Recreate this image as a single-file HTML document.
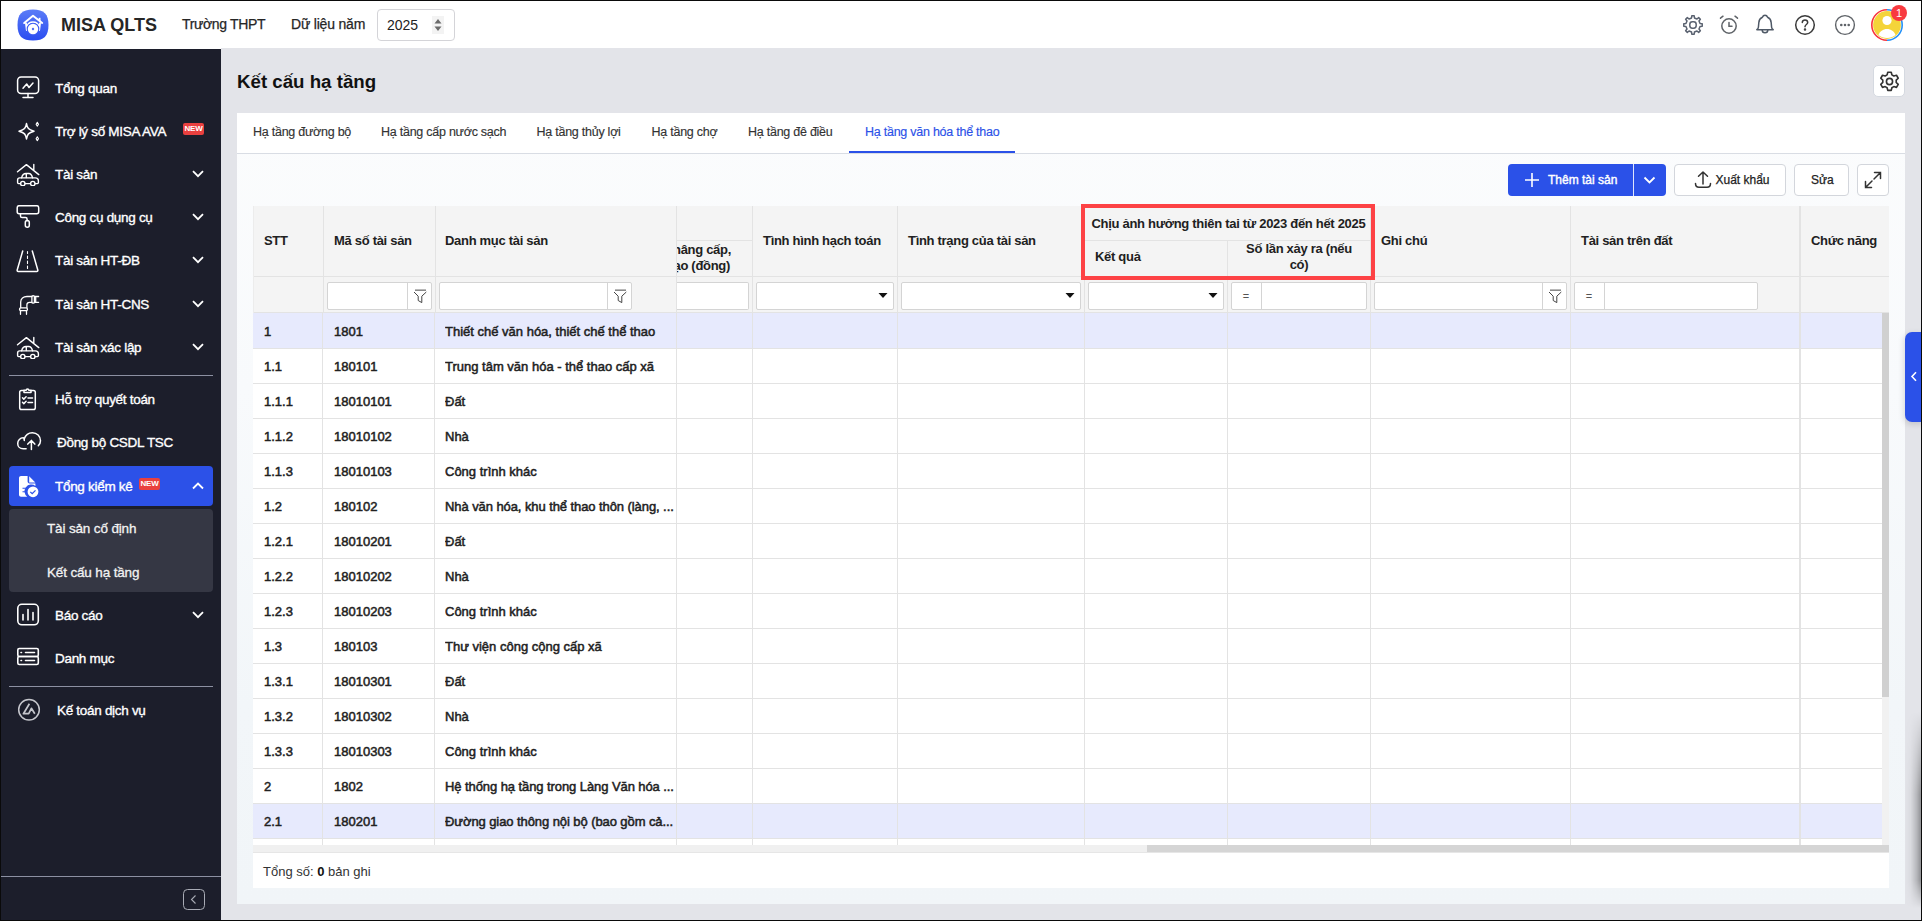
<!DOCTYPE html>
<html><head><meta charset="utf-8">
<style>
*{box-sizing:border-box;margin:0;padding:0}
html,body{width:1922px;height:921px;overflow:hidden;background:#e3e4e9;font-family:"Liberation Sans",sans-serif;color:#212121}
.a{position:absolute}
.t{position:absolute;white-space:nowrap;line-height:1}
#frame{position:absolute;left:0;top:0;width:1922px;height:921px;border:1px solid #0a0a0a;z-index:50;pointer-events:none}
#hdr{position:absolute;left:0;top:0;width:1922px;height:48px;background:#fff}
#side{position:absolute;left:0;top:49px;width:221px;height:872px;background:#1c1e2b}
.si{position:absolute;left:0;width:221px;height:40px}
.si svg.ic{position:absolute;left:16px;top:8px}
.si .lb{position:absolute;left:55px;top:0.5px;line-height:40px;font-size:13.5px;color:#fff;letter-spacing:-0.3px;-webkit-text-stroke:0.35px #fff;white-space:nowrap}
.si .chev{position:absolute;left:192px;top:16px}
.new{position:absolute;height:12px;width:21px;background:#e9403f;border-radius:2px;color:#fff;font-size:8px;font-weight:bold;line-height:12px;text-align:center;letter-spacing:-0.2px}
.sep{position:absolute;left:9px;width:204px;height:1px;background:#8c90a2}
.tab{font-size:12.5px;letter-spacing:-0.25px;-webkit-text-stroke:0.15px currentColor}
.th{font-size:13px;font-weight:bold;color:#212121;letter-spacing:-0.3px}
.td{font-size:13px;line-height:17px;color:#212121;-webkit-text-stroke:0.5px #212121}
.med{-webkit-text-stroke:0.25px currentColor}
</style></head><body>
<div id="hdr">
  <div class="a" style="left:0;top:48px;width:221px;height:1px;background:#fff"></div>
  <svg class="a" style="left:17px;top:9px" width="32" height="32" viewBox="0 0 32 32">
    <defs><linearGradient id="lg" x1="0" y1="0" x2="0" y2="1"><stop offset="0" stop-color="#5b7cf7"/><stop offset="1" stop-color="#2a4cf0"/></linearGradient></defs>
    <path d="M16 0.5C27 0.5 31.5 5 31.5 16S27 31.5 16 31.5 0.5 27 0.5 16 5 0.5 16 0.5Z" fill="url(#lg)"/>
    <path d="M7.2 14L16 6.8L25.2 14" stroke="#fff" stroke-width="2" fill="none" stroke-linecap="round" stroke-linejoin="round"/>
    <path d="M22.6 8.8v3.2" stroke="#fff" stroke-width="1.8"/>
    <path d="M9 14.5l0.8 6.5M23 14.5l-0.8 6.5" stroke="#fff" stroke-width="1.9" stroke-linecap="round"/>
    <path d="M10 17.5A6.3 6.3 0 0 1 22 17.5" stroke="#fff" stroke-width="1.6" fill="none"/>
    <circle cx="16" cy="20" r="6.3" fill="#3d5cf3"/>
    <circle cx="16" cy="20" r="5.2" fill="#fff"/>
    <path d="M16 18.6l1.3 1.4-1.3 1.4-1.3-1.4z" fill="#3557f2"/>
  </svg>
  <div class="t" style="left:61px;top:16px;font-size:18px;font-weight:bold;color:#262626">MISA QLTS</div>
  <div class="t" style="left:182px;top:17px;font-size:14px;color:#262626;letter-spacing:-0.35px;-webkit-text-stroke:0.25px #262626">Trường THPT</div>
  <div class="t" style="left:291px;top:17px;font-size:14px;color:#262626;letter-spacing:-0.2px;-webkit-text-stroke:0.25px #262626">Dữ liệu năm</div>
  <div class="a" style="left:377px;top:9px;width:78px;height:32px;border:1px solid #d4d4d8;border-radius:4px"></div>
  <div class="t" style="left:387px;top:18px;font-size:14px;color:#222">2025</div>
  <svg class="a" style="left:432px;top:16px" width="12" height="18" viewBox="0 0 12 18"><rect x="0" y="0" width="12" height="18" fill="#f3f3f3"/><path d="M2.5 7.5L6 3L9.5 7.5Z M2.5 10.5L6 15L9.5 10.5Z" fill="#6b6b6b"/></svg>
  <svg class="a" style="left:1682px;top:14px" width="22" height="22" viewBox="0 0 22 22" fill="none" stroke="#5a6270" stroke-width="1.5" stroke-linejoin="round"><path d="M9.57 3.94 L9.79 1.78 L12.21 1.78 L12.43 3.94 L14.98 5.00 L16.67 3.63 L18.37 5.33 L17.00 7.02 L18.06 9.57 L20.22 9.79 L20.22 12.21 L18.06 12.43 L17.00 14.98 L18.37 16.67 L16.67 18.37 L14.98 17.00 L12.43 18.06 L12.21 20.22 L9.79 20.22 L9.57 18.06 L7.02 17.00 L5.33 18.37 L3.63 16.67 L5.00 14.98 L3.94 12.43 L1.78 12.21 L1.78 9.79 L3.94 9.57 L5.00 7.02 L3.63 5.33 L5.33 3.63 L7.02 5.00Z"/><rect x="7.8" y="7.8" width="6.4" height="6.4" rx="2.6"/></svg>
  <svg class="a" style="left:1718px;top:14px" width="22" height="22" viewBox="0 0 22 22" fill="none" stroke="#5f6368" stroke-width="1.5" stroke-linecap="round"><circle cx="11" cy="12" r="7.2"/><path d="M11 8.5v3.8h3M2.5 4.2l2.5-2M19.5 4.2l-2.5-2"/></svg>
  <svg class="a" style="left:1754px;top:14px" width="22" height="22" viewBox="0 0 22 22" fill="none" stroke="#4f5966" stroke-width="1.5" stroke-linejoin="round" stroke-linecap="round"><path d="M2.8 15.7h16.4c-0.9-0.5-1.5-1.3-1.6-2.4l-0.4-4.6C17 6 15.6 4.2 13.6 3.3C13.2 2.2 12.2 1.3 11 1.3S8.8 2.2 8.4 3.3C6.4 4.2 5 6 4.8 8.7l-0.4 4.6c-0.1 1.1-0.7 1.9-1.6 2.4z"/><path d="M8.2 16c0 1.7 1.2 2.8 2.8 2.8s2.8-1.1 2.8-2.8"/></svg>
  <svg class="a" style="left:1794px;top:14px" width="22" height="22" viewBox="0 0 22 22" fill="none" stroke="#3a3a3a" stroke-width="1.5" stroke-linecap="round"><circle cx="11" cy="11" r="9.3"/><path d="M8.3 8.6c0-1.6 1.2-2.7 2.7-2.7s2.7 1.1 2.7 2.6c0 1.900-2.7 2.1-2.7 4.2"/><circle cx="11" cy="15.6" r="0.5" fill="#3a3a3a"/></svg>
  <svg class="a" style="left:1834px;top:14px" width="22" height="22" viewBox="0 0 22 22" fill="none" stroke="#5f6368" stroke-width="1.4"><circle cx="11" cy="11" r="9.4"/><circle cx="7.3" cy="11" r="0.6" fill="#5f6368"/><circle cx="11" cy="11" r="0.6" fill="#5f6368"/><circle cx="14.7" cy="11" r="0.6" fill="#5f6368"/></svg>
  <svg class="a" style="left:1871px;top:9px" width="32" height="32" viewBox="0 0 32 32"><path d="M16 31.2A15.2 15.2 0 0 1 16 0.8" stroke="#f8333c" stroke-width="1.6" fill="none"/><path d="M16 0.8A15.2 15.2 0 0 1 16 31.2" stroke="#2491f7" stroke-width="1.6" fill="none"/><circle cx="16" cy="16" r="13.9" fill="#f4d43a"/><circle cx="16" cy="11.5" r="4.6" fill="#fff"/><path d="M7.5 26c1.2-3.6 4.6-6 8.5-6s7.3 2.4 8.5 6c-2.3 2-5.3 3-8.5 3s-6.2-1-8.5-3z" fill="#fff"/></svg>
  <div class="a" style="left:1891px;top:5px;width:16px;height:16px;border-radius:50%;background:#f83a40;color:#fff;font-size:11px;line-height:16px;text-align:center">1</div>
</div>

<div id="side">
  <!-- Tổng quan y88 -->
  <div class="si" style="top:19px">
    <svg class="ic" width="24" height="24" viewBox="0 0 24 24" style="left:16px;top:8px" fill="none" stroke="#fff" stroke-width="1.5" stroke-linecap="round" stroke-linejoin="round"><rect x="1.6" y="1" width="21" height="16.5" rx="3.5"/><path d="M12 17.5v4M7 21.5h10"/><path d="M7 12.3L10.7 8L13 11.5L17 7"/></svg>
    <div class="lb">Tổng quan</div>
  </div>
  <div class="si" style="top:62px">
    <svg class="ic" width="24" height="24" viewBox="0 0 24 24" style="left:16px;top:8px" fill="none" stroke="#fff" stroke-width="1.5" stroke-linejoin="round"><path d="M10.5 4.5C11.3 9.3 12.4 10.6 18 12.2C12.4 13.8 11.3 15.1 10.5 20C9.7 15.1 8.6 13.8 3 12.2C8.6 10.6 9.7 9.3 10.5 4.5Z"/><path d="M21.3 3.3l1.2 1.9-1.2 1.9-1.2-1.9z M21.3 17.8l1.2 1.9-1.2 1.9-1.2-1.9z" stroke-width="1.1"/></svg>
    <div class="lb">Trợ lý số MISA AVA</div>
    <div class="new" style="left:183px;top:12px">NEW</div>
  </div>
  <div class="si" style="top:105px">
    <svg class="ic" width="24" height="24" viewBox="0 0 24 24" style="left:16px;top:8px" fill="none" stroke="#fff" stroke-width="1.4" stroke-linecap="round" stroke-linejoin="round"><path d="M1.5 9.8L10.4 2.6L22.8 12.6M17.8 2.5V7.8"/><path d="M5.6 15.9C6.2 13 7.6 11.5 10 11.5H12.8C14.6 11.5 15.8 12.8 16.6 15.9M10.3 11.8V15.6"/><path d="M4.6 21.6H2.6C1.9 21.6 1.6 21.2 1.6 20.6V18C1.6 16.8 2.5 15.9 3.8 15.9H19.3C21.2 15.9 22.4 17 22.4 18.8V20.6C22.4 21.2 22.1 21.6 21.4 21.6H19.1M14.5 21.6H9.1"/><circle cx="6.8" cy="21.6" r="2.2"/><circle cx="16.8" cy="21.6" r="2.2"/></svg>
    <div class="lb">Tài sản</div>
    <svg class="chev" width="12" height="8" viewBox="0 0 12 8"><path d="M1 1.2L6 6.2L11 1.2" stroke="#fff" stroke-width="1.8" fill="none"/></svg>
  </div>
  <div class="si" style="top:148px">
    <svg class="ic" width="24" height="24" viewBox="0 0 24 24" style="left:16px;top:8px" fill="none" stroke="#fff" stroke-width="1.5" stroke-linecap="round" stroke-linejoin="round"><rect x="1.2" y="0.7" width="21.5" height="8" rx="2"/><path d="M4.5 8.7v2.3c0 1 0.6 1.6 1.6 1.6h3.4c1 0 1.6 0.6 1.6 1.6v1.5"/><rect x="9.3" y="15.5" width="4" height="6.7" rx="2"/></svg>
    <div class="lb">Công cụ dụng cụ</div>
    <svg class="chev" width="12" height="8" viewBox="0 0 12 8"><path d="M1 1.2L6 6.2L11 1.2" stroke="#fff" stroke-width="1.8" fill="none"/></svg>
  </div>
  <div class="si" style="top:191px">
    <svg class="ic" width="24" height="24" viewBox="0 0 24 24" style="left:16px;top:10px" fill="none" stroke="#fff" stroke-width="1.5" stroke-linecap="round" stroke-linejoin="round"><path d="M6.7 1L1.2 20c-0.2 1 0.2 1.4 1 1.4h18.6c0.8 0 1.2-0.4 1-1.4L16.3 1"/><path d="M11.5 1.5v2M11.5 6v2.5M11.5 11v2.5M11.5 16v2.5" stroke-width="1.1"/></svg>
    <div class="lb">Tài sản HT-ĐB</div>
    <svg class="chev" width="12" height="8" viewBox="0 0 12 8"><path d="M1 1.2L6 6.2L11 1.2" stroke="#fff" stroke-width="1.8" fill="none"/></svg>
  </div>
  <div class="si" style="top:235px">
    <svg class="ic" width="24" height="24" viewBox="0 0 24 24" style="left:16px;top:8px" fill="none" stroke="#fff" stroke-width="1.3" stroke-linecap="round" stroke-linejoin="round"><path d="M4.7 15.5V10C4.7 6.8 7.3 4.5 11 4.5H15.9M10.9 15.5V12.8C10.9 11.2 12 10.3 13.6 10.3H15.9"/><rect x="15.9" y="3.6" width="2.5" height="7.6" rx="1.25"/><path d="M18.4 4.5H22.6M18.4 10.3H22.6M19.7 4.5V10.3"/><rect x="3.5" y="15.9" width="8" height="2.8" rx="1.4"/><path d="M4.5 18.7V22.3M10.5 18.7V22.3"/></svg>
    <div class="lb">Tài sản HT-CNS</div>
    <svg class="chev" width="12" height="8" viewBox="0 0 12 8"><path d="M1 1.2L6 6.2L11 1.2" stroke="#fff" stroke-width="1.8" fill="none"/></svg>
  </div>
  <div class="si" style="top:278px">
    <svg class="ic" width="24" height="24" viewBox="0 0 24 24" style="left:16px;top:8px" fill="none" stroke="#fff" stroke-width="1.4" stroke-linecap="round" stroke-linejoin="round"><path d="M1.5 9.8L10.4 2.6L22.8 12.6M17.8 2.5V7.8"/><path d="M5.6 15.9C6.2 13 7.6 11.5 10 11.5H12.8C14.6 11.5 15.8 12.8 16.6 15.9M10.3 11.8V15.6"/><path d="M4.6 21.6H2.6C1.9 21.6 1.6 21.2 1.6 20.6V18C1.6 16.8 2.5 15.9 3.8 15.9H19.3C21.2 15.9 22.4 17 22.4 18.8V20.6C22.4 21.2 22.1 21.6 21.4 21.6H19.1M14.5 21.6H9.1"/><circle cx="6.8" cy="21.6" r="2.2"/><circle cx="16.8" cy="21.6" r="2.2"/></svg>
    <div class="lb">Tài sản xác lập</div>
    <svg class="chev" width="12" height="8" viewBox="0 0 12 8"><path d="M1 1.2L6 6.2L11 1.2" stroke="#fff" stroke-width="1.8" fill="none"/></svg>
  </div>
  <div class="sep" style="top:326px"></div>
  <div class="si" style="top:330px">
    <svg class="ic" width="24" height="24" viewBox="0 0 24 24" style="left:16px;top:8px" fill="none" stroke="#fff" stroke-width="1.5" stroke-linecap="round" stroke-linejoin="round"><path d="M8 3.5H5.5c-1 0-1.8 0.8-1.8 1.8v15.5c0 1 0.8 1.8 1.8 1.8h12c1 0 1.8-0.8 1.8-1.8V5.3c0-1-0.8-1.8-1.8-1.8H15"/><path d="M8 5.5h7V3.3h-2.2a1.3 1.3 0 0 0-2.6 0H8z"/><path d="M6.5 10.8l1.3 1.3 2.3-2.3M6.5 15.3l1.3 1.3 2.3-2.3M12 11h4.5M12 15.5h4.5"/></svg>
    <div class="lb">Hỗ trợ quyết toán</div>
  </div>
  <div class="si" style="top:373px">
    <svg class="ic" width="28" height="24" viewBox="0 0 28 24" style="left:15px;top:8px" fill="none" stroke="#fff" stroke-width="1.5" stroke-linecap="round" stroke-linejoin="round"><path d="M11.1 18.8H8.2C5 18.8 2.7 16.4 2.7 13.4C2.7 10.3 5.2 7.8 8.2 7.8C8.9 7.8 9.3 8.6 9.3 10.6"/><path d="M9.2 9C10.5 5 13.5 2.7 17.4 2.7C21.9 2.7 25.5 6.3 25.5 10.8C25.5 12.7 24.6 14.5 23.3 15.8"/><path d="M16.4 10.4V19.5M12.8 14.1L16.4 10.4L19.8 14.1"/></svg>
    <div class="lb" style="left:57px">Đồng bộ CSDL TSC</div>
  </div>
  <div class="a" style="left:9px;top:417px;width:204px;height:40px;background:#2c51e8;border-radius:4px"></div>
  <div class="si" style="top:417px">
    <svg class="ic" width="24" height="24" viewBox="0 0 24 24" style="left:16px;top:8px"><path d="M3 4c0-1.1 0.9-2 2-2h6.6v5.6c0 1.1 0.8 1.9 1.9 1.9h5.9v2.4a6.4 6.4 0 0 0-8.2 10.8H5c-1.1 0-2-0.9-2-2z" fill="#fff"/><path d="M13.2 2.3l6.1 6.1h-6.1z" fill="#fff"/><path d="M6.5 14.3h5.4M6.5 17.8h3.6" stroke="#2c51e8" stroke-width="1.1"/><circle cx="17" cy="17.8" r="5.4" fill="#fff"/><path d="M14.3 17.9l1.9 1.8 3.3-3.3" stroke="#2c51e8" stroke-width="1.3" fill="none"/></svg>
    <div class="lb">Tổng kiểm kê</div>
    <div class="new" style="left:139px;top:12px">NEW</div>
    <svg class="chev" width="12" height="8" viewBox="0 0 12 8" style="top:16px"><path d="M1 6.5L6 1.5L11 6.5" stroke="#fff" stroke-width="1.8" fill="none"/></svg>
  </div>
  <div class="a" style="left:9px;top:460px;width:204px;height:83px;background:#353744;border-radius:4px"></div>
  <div class="t" style="left:47px;top:473px;font-size:13.5px;color:#f2f2f2;letter-spacing:-0.15px;-webkit-text-stroke:0.3px #f2f2f2">Tài sản cố định</div>
  <div class="t" style="left:47px;top:517px;font-size:13.5px;color:#f2f2f2;letter-spacing:-0.15px;-webkit-text-stroke:0.3px #f2f2f2">Kết cấu hạ tầng</div>
  <div class="si" style="top:546px">
    <svg class="ic" width="24" height="24" viewBox="0 0 24 24" style="left:16px;top:8px" fill="none" stroke="#fff" stroke-width="1.6" stroke-linecap="round" stroke-linejoin="round"><rect x="1.8" y="1.3" width="20.5" height="20.5" rx="4"/><path d="M7 11.5v5.5M12 6.5v10.5M17 9.5v7.5"/></svg>
    <div class="lb">Báo cáo</div>
    <svg class="chev" width="12" height="8" viewBox="0 0 12 8"><path d="M1 1.2L6 6.2L11 1.2" stroke="#fff" stroke-width="1.8" fill="none"/></svg>
  </div>
  <div class="si" style="top:589px">
    <svg class="ic" width="24" height="24" viewBox="0 0 24 24" style="left:16px;top:7px" fill="none" stroke="#fff" stroke-width="1.6" stroke-linecap="round" stroke-linejoin="round"><rect x="1.8" y="3.5" width="20.5" height="8" rx="1.5"/><rect x="1.8" y="11.5" width="20.5" height="8" rx="1.5"/><path d="M5 7.5h0.5M5 15.5h0.5M9.5 7.5h9M9.5 15.5h9"/></svg>
    <div class="lb">Danh mục</div>
  </div>
  <div class="sep" style="top:637px"></div>
  <div class="si" style="top:641px">
    <svg class="ic" width="26" height="26" viewBox="0 0 26 26" style="left:16px;top:7px" fill="none" stroke="#c5c6cc" stroke-width="1.5" stroke-linejoin="round"><circle cx="13" cy="12.8" r="10.3"/><path d="M13.4 6.8L7.4 16.7H12.7L15.4 11.3L18.8 16.7" stroke-width="1.7"/></svg>
    <div class="lb" style="left:57px">Kế toán dịch vụ</div>
  </div>
  <div class="a" style="left:0;top:827px;width:221px;height:1px;background:#8c90a2"></div>
  <svg class="a" style="left:183px;top:840px" width="22" height="21" viewBox="0 0 22 21" fill="none"><rect x="0.5" y="0.5" width="21" height="20" rx="4" stroke="#a8abb5"/><path d="M12.5 6.5L8.5 10.5L12.5 14.5" stroke="#a8abb5" stroke-width="1.1"/></svg>
</div>

<div id="main"><div class="t" style="left:237px;top:72.5px;font-size:18.7px;font-weight:bold;color:#111">Kết cấu hạ tầng</div>
<div class="a" style="left:1873px;top:65px;width:32px;height:32px;background:#fff;border:1px solid #d5d9e0;border-radius:5px"></div>
<svg class="a" style="left:1877.5px;top:69.5px" width="23" height="23" viewBox="0 0 24 24" fill="none" stroke="#333" stroke-width="1.7" stroke-linejoin="round"><path d="M10.2 2.3h3.6l0.7 2.8 2 1.2 2.8-0.8 1.8 3.1-2.1 2v2.4l2.1 2-1.8 3.1-2.8-0.8-2 1.2-0.7 2.8h-3.6l-0.7-2.8-2-1.2-2.8 0.8-1.8-3.1 2.1-2v-2.4l-2.1-2 1.8-3.1 2.8 0.8 2-1.2z"/><circle cx="12" cy="12" r="3.2"/></svg>
<div class="a" style="left:237px;top:113px;width:1668px;height:791px;background:linear-gradient(180deg,#fbfcfd 0%,#f8fafc 35%,#f2f6f9 75%,#f1f5f8 100%)"></div>
<div class="a" style="left:237px;top:113px;width:1668px;height:41px;background:#fff;border-bottom:1px solid #d9dde4"></div>
<div class="t tab" style="left:253px;top:126px;color:#333">Hạ tầng đường bộ</div>
<div class="t tab" style="left:381px;top:126px;color:#333">Hạ tầng cấp nước sạch</div>
<div class="t tab" style="left:536.5px;top:126px;color:#333">Hạ tầng thủy lợi</div>
<div class="t tab" style="left:651.5px;top:126px;color:#333">Hạ tầng chợ</div>
<div class="t tab" style="left:748px;top:126px;color:#333">Hạ tầng đê điều</div>
<div class="t tab" style="left:865px;top:126px;color:#2b51e8">Hạ tầng văn hóa thể thao</div>
<div class="a" style="left:849px;top:151px;width:166px;height:2px;background:#2b51e8"></div>
<div class="a" style="left:1508px;top:164px;width:158px;height:32px;background:#2b51e8;border-radius:4px"></div>
<div class="a" style="left:1633px;top:164px;width:1px;height:32px;background:#fff;opacity:.85"></div>
<svg class="a" style="left:1524px;top:172px" width="16" height="16" viewBox="0 0 16 16"><path d="M8 1v14M1 8h14" stroke="#fff" stroke-width="1.6"/></svg>
<div class="t med" style="left:1548px;top:174px;font-size:12px;color:#fff;-webkit-text-stroke:0.4px #fff">Thêm tài sản</div>
<svg class="a" style="left:1643px;top:176px" width="13" height="8" viewBox="0 0 13 8"><path d="M1.5 1.5L6.5 6.5L11.5 1.5" stroke="#fff" stroke-width="1.8" fill="none"/></svg>
<div class="a" style="left:1674px;top:164px;width:112px;height:32px;background:#fff;border:1px solid #d3d6dc;border-radius:4px"></div>
<svg class="a" style="left:1694px;top:170px" width="18" height="19" viewBox="0 0 18 19" fill="none" stroke="#333" stroke-width="1.5" stroke-linecap="round"><path d="M9 14V2M4.5 6.3L9 2l4.5 4.3"/><path d="M1.5 13.5c0 2.5 1.5 3.8 3.5 3.8h8c2 0 3.5-1.3 3.5-3.8"/></svg>
<div class="t med" style="left:1715.5px;top:174px;font-size:12px;color:#222">Xuất khẩu</div>
<div class="a" style="left:1794px;top:164px;width:55px;height:32px;background:#fff;border:1px solid #d3d6dc;border-radius:4px"></div>
<div class="t med" style="left:1811px;top:174px;font-size:12px;color:#222">Sửa</div>
<div class="a" style="left:1857px;top:164px;width:32px;height:32px;background:#fff;border:1px solid #d3d6dc;border-radius:4px"></div>
<svg class="a" style="left:1864px;top:171px" width="18" height="18" viewBox="0 0 18 18" fill="none" stroke="#333" stroke-width="1.5" stroke-linecap="round"><path d="M10.5 1.5h6v6M16.5 1.5L10 8M7.5 16.5h-6v-6M1.5 16.5L8 10"/></svg>
<div class="a" style="left:253px;top:206px;width:1636px;height:107px;background:#f4f4f4"></div>
<div class="a" style="left:253px;top:313px;width:1629px;height:532px;background:#fff"></div>
<div class="a" style="left:253px;top:313px;width:1629px;height:35px;background:#e7eafd"></div>
<div class="a" style="left:253px;top:803px;width:1629px;height:35px;background:#e7eafd"></div>
<div class="a" style="left:253px;top:276px;width:1636px;height:1px;background:#e3e3e3"></div>
<div class="a" style="left:253px;top:312px;width:1636px;height:1px;background:#e3e3e3"></div>
<div class="a" style="left:253px;top:348px;width:1629px;height:1px;background:#e3e3e3"></div>
<div class="a" style="left:253px;top:383px;width:1629px;height:1px;background:#e3e3e3"></div>
<div class="a" style="left:253px;top:418px;width:1629px;height:1px;background:#e3e3e3"></div>
<div class="a" style="left:253px;top:453px;width:1629px;height:1px;background:#e3e3e3"></div>
<div class="a" style="left:253px;top:488px;width:1629px;height:1px;background:#e3e3e3"></div>
<div class="a" style="left:253px;top:523px;width:1629px;height:1px;background:#e3e3e3"></div>
<div class="a" style="left:253px;top:558px;width:1629px;height:1px;background:#e3e3e3"></div>
<div class="a" style="left:253px;top:593px;width:1629px;height:1px;background:#e3e3e3"></div>
<div class="a" style="left:253px;top:628px;width:1629px;height:1px;background:#e3e3e3"></div>
<div class="a" style="left:253px;top:663px;width:1629px;height:1px;background:#e3e3e3"></div>
<div class="a" style="left:253px;top:698px;width:1629px;height:1px;background:#e3e3e3"></div>
<div class="a" style="left:253px;top:733px;width:1629px;height:1px;background:#e3e3e3"></div>
<div class="a" style="left:253px;top:768px;width:1629px;height:1px;background:#e3e3e3"></div>
<div class="a" style="left:253px;top:803px;width:1629px;height:1px;background:#e3e3e3"></div>
<div class="a" style="left:253px;top:838px;width:1629px;height:1px;background:#e3e3e3"></div>
<div class="a" style="left:323px;top:206px;width:1px;height:107px;background:#e3e3e3"></div>
<div class="a" style="left:322px;top:313px;width:1px;height:532px;background:#e3e3e3"></div>
<div class="a" style="left:435px;top:206px;width:1px;height:107px;background:#e3e3e3"></div>
<div class="a" style="left:434px;top:313px;width:1px;height:532px;background:#e3e3e3"></div>
<div class="a" style="left:676px;top:206px;width:1px;height:107px;background:#e3e3e3"></div>
<div class="a" style="left:676px;top:313px;width:1px;height:532px;background:#e3e3e3"></div>
<div class="a" style="left:752px;top:206px;width:1px;height:107px;background:#e3e3e3"></div>
<div class="a" style="left:752px;top:313px;width:1px;height:532px;background:#e3e3e3"></div>
<div class="a" style="left:897px;top:206px;width:1px;height:107px;background:#e3e3e3"></div>
<div class="a" style="left:897px;top:313px;width:1px;height:532px;background:#e3e3e3"></div>
<div class="a" style="left:1084px;top:206px;width:1px;height:107px;background:#e3e3e3"></div>
<div class="a" style="left:1084px;top:313px;width:1px;height:532px;background:#e3e3e3"></div>
<div class="a" style="left:1227px;top:241px;width:1px;height:72px;background:#e3e3e3"></div>
<div class="a" style="left:1227px;top:313px;width:1px;height:532px;background:#e3e3e3"></div>
<div class="a" style="left:1370px;top:206px;width:1px;height:107px;background:#e3e3e3"></div>
<div class="a" style="left:1370px;top:313px;width:1px;height:532px;background:#e3e3e3"></div>
<div class="a" style="left:1570px;top:206px;width:1px;height:107px;background:#e3e3e3"></div>
<div class="a" style="left:1570px;top:313px;width:1px;height:532px;background:#e3e3e3"></div>
<div class="a" style="left:1799px;top:206px;width:2px;height:107px;background:#e3e3e3"></div>
<div class="a" style="left:1799px;top:313px;width:2px;height:532px;background:#e3e3e3"></div>
<div class="a" style="left:253px;top:206px;width:1px;height:107px;background:#ececec"></div>
<div class="a" style="left:676px;top:240px;width:76px;height:1px;background:#e3e3e3"></div>
<div class="a" style="left:1085px;top:240px;width:285px;height:1px;background:#e3e3e3"></div>
<div class="t th" style="left:264px;top:234px;">STT</div>
<div class="t th" style="left:334px;top:234px;">Mã số tài sản</div>
<div class="t th" style="left:445px;top:234px;">Danh mục tài sản</div>
<div class="t th" style="left:763px;top:234px;">Tình hình hạch toán</div>
<div class="t th" style="left:908px;top:234px;">Tình trạng của tài sản</div>
<div class="t th" style="left:1381px;top:234px;">Ghi chú</div>
<div class="t th" style="left:1581px;top:234px;">Tài sản trên đất</div>
<div class="t th" style="left:1811px;top:234px;">Chức năng</div>
<div class="t th" style="left:1091.5px;top:217px;">Chịu ảnh hưởng thiên tai từ 2023 đến hết 2025</div>
<div class="t th" style="left:1095px;top:250px;">Kết quả</div>
<div class="t th" style="left:1228px;top:242px;width:142px;text-align:center">Số lần xảy ra (nếu</div>
<div class="t th" style="left:1228px;top:258px;width:142px;text-align:center">có)</div>
<div class="a" style="left:677px;top:241px;width:75px;height:35px;overflow:hidden"><div class="t th" style="right:21px;top:2px">Giá trị nâng cấp,</div><div class="t th" style="right:22px;top:18px">cải tạo (đồng)</div></div>
<div class="a" style="left:327px;top:282px;width:105px;height:28px;background:#fff;border:1px solid #d4d4d4;border-radius:2px"></div>
<div class="a" style="left:407px;top:282px;width:1px;height:28px;background:#d4d4d4"></div>
<svg class="a" style="left:408px;top:280px" width="24" height="32" viewBox="0 0 24 32" fill="none" stroke-linejoin="round"><path d="M7 10.2H18" stroke="#8a8a8a" stroke-width="1.6"/><path d="M6 12L10.2 16.2V20.5L13.8 22.6V16.2L18.3 12" stroke="#444" stroke-width="1"/></svg>
<div class="a" style="left:439px;top:282px;width:193px;height:28px;background:#fff;border:1px solid #d4d4d4;border-radius:2px"></div>
<div class="a" style="left:607px;top:282px;width:1px;height:28px;background:#d4d4d4"></div>
<svg class="a" style="left:608px;top:280px" width="24" height="32" viewBox="0 0 24 32" fill="none" stroke-linejoin="round"><path d="M7 10.2H18" stroke="#8a8a8a" stroke-width="1.6"/><path d="M6 12L10.2 16.2V20.5L13.8 22.6V16.2L18.3 12" stroke="#444" stroke-width="1"/></svg>
<div class="a" style="left:677px;top:282px;width:72px;height:28px;background:#fff;border:1px solid #d4d4d4;border-left:none;border-radius:0 2px 2px 0"></div>
<div class="a" style="left:756px;top:282px;width:138px;height:28px;background:#fff;border:1px solid #d4d4d4;border-radius:2px"></div>
<svg class="a" style="left:878px;top:292px" width="10" height="7" viewBox="0 0 10 7"><path d="M0.5 1h9L5 6z" fill="#111"/></svg>
<div class="a" style="left:901px;top:282px;width:180px;height:28px;background:#fff;border:1px solid #d4d4d4;border-radius:2px"></div>
<svg class="a" style="left:1065px;top:292px" width="10" height="7" viewBox="0 0 10 7"><path d="M0.5 1h9L5 6z" fill="#111"/></svg>
<div class="a" style="left:1088px;top:282px;width:136px;height:28px;background:#fff;border:1px solid #d4d4d4;border-radius:2px"></div>
<svg class="a" style="left:1208px;top:292px" width="10" height="7" viewBox="0 0 10 7"><path d="M0.5 1h9L5 6z" fill="#111"/></svg>
<div class="a" style="left:1231px;top:282px;width:136px;height:28px;background:#fff;border:1px solid #d4d4d4;border-radius:2px"></div>
<div class="a" style="left:1261px;top:282px;width:1px;height:28px;background:#d4d4d4"></div>
<div class="t" style="left:1231px;top:291px;width:30px;text-align:center;font-size:11px;color:#555">=</div>
<div class="a" style="left:1374px;top:282px;width:193px;height:28px;background:#fff;border:1px solid #d4d4d4;border-radius:2px"></div>
<div class="a" style="left:1542px;top:282px;width:1px;height:28px;background:#d4d4d4"></div>
<svg class="a" style="left:1543px;top:280px" width="24" height="32" viewBox="0 0 24 32" fill="none" stroke-linejoin="round"><path d="M7 10.2H18" stroke="#8a8a8a" stroke-width="1.6"/><path d="M6 12L10.2 16.2V20.5L13.8 22.6V16.2L18.3 12" stroke="#444" stroke-width="1"/></svg>
<div class="a" style="left:1574px;top:282px;width:184px;height:28px;background:#fff;border:1px solid #d4d4d4;border-radius:2px"></div>
<div class="a" style="left:1604px;top:282px;width:1px;height:28px;background:#d4d4d4"></div>
<div class="t" style="left:1574px;top:291px;width:30px;text-align:center;font-size:11px;color:#555">=</div>
<div class="a" style="left:1081px;top:204px;width:294px;height:76px;border:4px solid #fd4245"></div>
<div class="t td" style="left:264px;top:323px">1</div>
<div class="t td" style="left:334px;top:323px">1801</div>
<div class="t td" style="left:445px;top:323px;width:231px;overflow:hidden;">Thiết chế văn hóa, thiết chế thể thao</div>
<div class="t td" style="left:264px;top:358px">1.1</div>
<div class="t td" style="left:334px;top:358px">180101</div>
<div class="t td" style="left:445px;top:358px;width:231px;overflow:hidden;">Trung tâm văn hóa - thể thao cấp xã</div>
<div class="t td" style="left:264px;top:393px">1.1.1</div>
<div class="t td" style="left:334px;top:393px">18010101</div>
<div class="t td" style="left:445px;top:393px;width:231px;overflow:hidden;">Đất</div>
<div class="t td" style="left:264px;top:428px">1.1.2</div>
<div class="t td" style="left:334px;top:428px">18010102</div>
<div class="t td" style="left:445px;top:428px;width:231px;overflow:hidden;">Nhà</div>
<div class="t td" style="left:264px;top:463px">1.1.3</div>
<div class="t td" style="left:334px;top:463px">18010103</div>
<div class="t td" style="left:445px;top:463px;width:231px;overflow:hidden;">Công trình khác</div>
<div class="t td" style="left:264px;top:498px">1.2</div>
<div class="t td" style="left:334px;top:498px">180102</div>
<div class="t td" style="left:445px;top:498px;width:231px;overflow:hidden;letter-spacing:-0.08px;">Nhà văn hóa, khu thể thao thôn (làng, ...</div>
<div class="t td" style="left:264px;top:533px">1.2.1</div>
<div class="t td" style="left:334px;top:533px">18010201</div>
<div class="t td" style="left:445px;top:533px;width:231px;overflow:hidden;">Đất</div>
<div class="t td" style="left:264px;top:568px">1.2.2</div>
<div class="t td" style="left:334px;top:568px">18010202</div>
<div class="t td" style="left:445px;top:568px;width:231px;overflow:hidden;">Nhà</div>
<div class="t td" style="left:264px;top:603px">1.2.3</div>
<div class="t td" style="left:334px;top:603px">18010203</div>
<div class="t td" style="left:445px;top:603px;width:231px;overflow:hidden;">Công trình khác</div>
<div class="t td" style="left:264px;top:638px">1.3</div>
<div class="t td" style="left:334px;top:638px">180103</div>
<div class="t td" style="left:445px;top:638px;width:231px;overflow:hidden;">Thư viện công cộng cấp xã</div>
<div class="t td" style="left:264px;top:673px">1.3.1</div>
<div class="t td" style="left:334px;top:673px">18010301</div>
<div class="t td" style="left:445px;top:673px;width:231px;overflow:hidden;">Đất</div>
<div class="t td" style="left:264px;top:708px">1.3.2</div>
<div class="t td" style="left:334px;top:708px">18010302</div>
<div class="t td" style="left:445px;top:708px;width:231px;overflow:hidden;">Nhà</div>
<div class="t td" style="left:264px;top:743px">1.3.3</div>
<div class="t td" style="left:334px;top:743px">18010303</div>
<div class="t td" style="left:445px;top:743px;width:231px;overflow:hidden;">Công trình khác</div>
<div class="t td" style="left:264px;top:778px">2</div>
<div class="t td" style="left:334px;top:778px">1802</div>
<div class="t td" style="left:445px;top:778px;width:231px;overflow:hidden;letter-spacing:-0.08px;">Hệ thống hạ tầng trong Làng Văn hóa ...</div>
<div class="t td" style="left:264px;top:813px">2.1</div>
<div class="t td" style="left:334px;top:813px">180201</div>
<div class="t td" style="left:445px;top:813px;width:231px;overflow:hidden;letter-spacing:-0.08px;">Đường giao thông nội bộ (bao gồm cả...</div>
<div class="a" style="left:1882px;top:313px;width:7px;height:532px;background:#f1f1f1"></div>
<div class="a" style="left:1882px;top:313px;width:7px;height:384px;background:#d0d0d0"></div>
<div class="a" style="left:253px;top:845px;width:1636px;height:8px;background:#f0f0f0;border-bottom:1px solid #e6e6e6"></div>
<div class="a" style="left:1147px;top:845px;width:742px;height:7px;background:#d5d5d5"></div>
<div class="a" style="left:253px;top:853px;width:1636px;height:35px;background:#fff"></div>
<div class="t" style="left:263px;top:865px;font-size:13px;color:#333">Tổng số: <b style="color:#111">0</b> bản ghi</div>
<div class="a" style="left:1905px;top:332px;width:20px;height:90px;background:#2b51e8;border-radius:7px 0 0 7px;box-shadow:-1px 2px 6px rgba(0,0,0,.15)"></div>
<svg class="a" style="left:1910px;top:371px" width="8" height="11" viewBox="0 0 8 11"><path d="M6 1.2L2 5.5L6 9.8" stroke="#fff" stroke-width="1.6" fill="none"/></svg>
<div class="a" style="left:1905px;top:712px;width:16px;height:196px;background:linear-gradient(90deg,rgba(0,0,0,0) 0,rgba(0,0,0,.04) 35%,rgba(0,0,0,.18) 70%,rgba(0,0,0,.36) 100%);-webkit-mask-image:linear-gradient(180deg,transparent 0,#000 42%,#000 86%,transparent 100%)"></div></div>

<div id="frame"></div>
</body></html>
